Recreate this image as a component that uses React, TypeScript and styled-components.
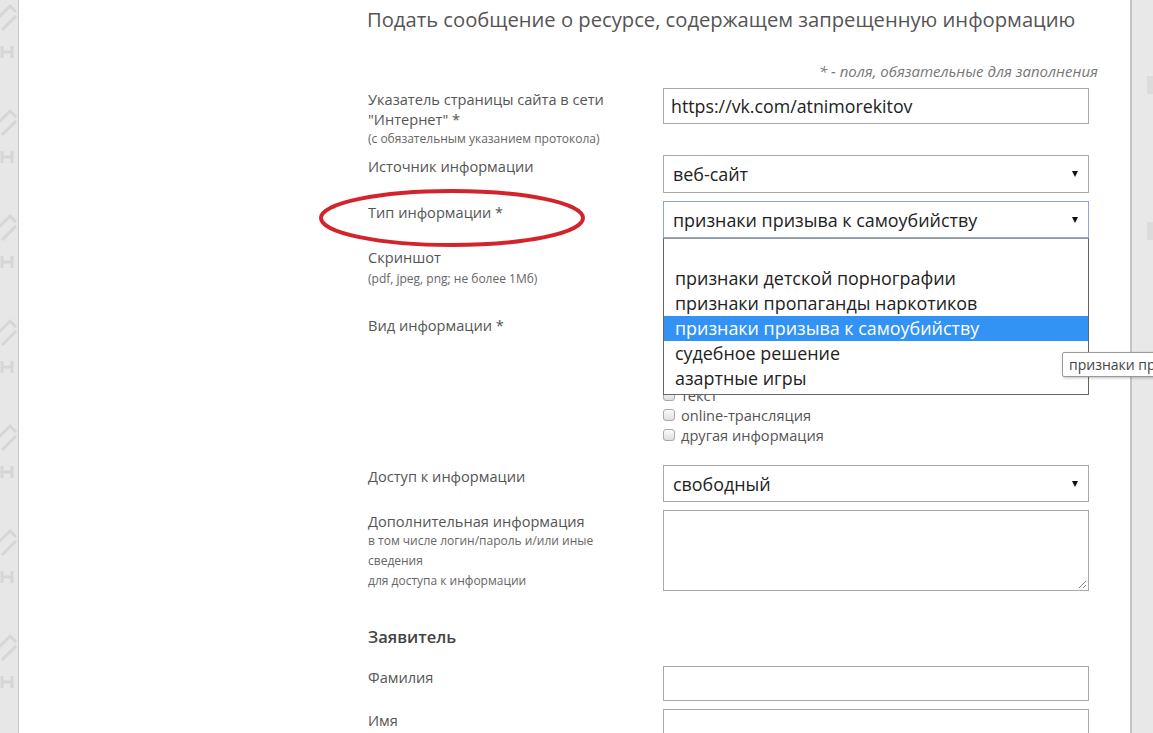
import React from 'react';
import styled, { createGlobalStyle } from 'styled-components';

const GlobalStyle = createGlobalStyle`
  html, body {
    margin: 0;
    padding: 0;
    background: #fff;
  }
  body {
    font-family: 'Open Sans', 'Noto Sans', sans-serif;
    color: #555;
  }
`;

const Page = styled.div`
  position: relative;
  display: flex;
  width: 1153px;
  height: 733px;
  overflow: hidden;
`;

const LeftStrip = styled.div`
  position: relative;
  width: 18px;
  flex-shrink: 0;
  background: #e7e7e7;
  border-right: 1px solid #c9c9c9;
  overflow: hidden;
`;

const RightStrip = styled.div`
  position: relative;
  width: 21px;
  flex-shrink: 0;
  background: #e8e8e8;
  border-left: 2px solid #c4c4c4;
`;

const StripMark = styled.div<{ $top: number }>`
  position: absolute;
  right: 0;
  top: ${p => p.$top}px;
  width: 6px;
  height: 18px;
  background: #dcdcdc;
`;

const Main = styled.main`
  flex: 1;
  padding: 0 0 0 349px;
  background: #fff;
`;

const Title = styled.h1`
  margin: 5px 0 0 -1px;
  font-size: 20.2px;
  line-height: 28px;
  font-weight: 400;
  color: #555;
`;

const RequiredNote = styled.div`
  width: 730px;
  margin-top: 28px;
  text-align: right;
  font-size: 15px;
  line-height: 20px;
  font-style: italic;
  color: #777;
`;

const Form = styled.form`
  display: flex;
  flex-direction: column;
  width: 721px;
`;

const Row = styled.div<{ $mt: number }>`
  display: grid;
  grid-template-columns: 295px 426px;
  margin-top: ${p => p.$mt}px;
`;

const Label = styled.div`
  max-width: 262px;
  padding-top: 1px;
  font-size: 14.6px;
  line-height: 20px;
  color: #555;
`;

const Hint = styled.div<{ $lh?: number }>`
  font-size: 12px;
  line-height: ${p => p.$lh ?? 20}px;
  color: #666;
`;

const TextInput = styled.div<{ $h: number }>`
  box-sizing: border-box;
  height: ${p => p.$h}px;
  border: 1px solid #aaa;
  padding: 0 7px;
  display: flex;
  align-items: center;
  font-size: 17.8px;
  color: #222;
  background: #fff;
`;

const Select = styled.div<{ $h: number; $focus?: boolean }>`
  box-sizing: border-box;
  height: ${p => p.$h}px;
  border: 1px solid ${p => (p.$focus ? '#8da6c9' : '#aaa')};
  padding: 0 10px 0 9px;
  display: flex;
  align-items: center;
  justify-content: space-between;
  font-size: 17.9px;
  color: #222;
  background: #fff;
`;

const Arrow = styled.span`
  width: 0;
  height: 0;
  border-left: 3px solid transparent;
  border-right: 3px solid transparent;
  border-top: 6px solid #111;
`;

const TextArea = styled.div`
  position: relative;
  box-sizing: border-box;
  height: 81px;
  border: 1px solid #aaa;
  background: #fff;
`;

const Grip = styled.svg`
  position: absolute;
  right: 1px;
  bottom: 1px;
`;

const CheckList = styled.div`
  padding-top: 11px;
  display: flex;
  flex-direction: column;
`;

const CheckItem = styled.label`
  display: flex;
  align-items: center;
  gap: 6px;
  font-size: 14.6px;
  line-height: 20px;
  color: #555;
`;

const Box = styled.span`
  box-sizing: border-box;
  width: 12px;
  height: 12px;
  border: 1px solid #aaa;
  border-radius: 3px;
  background: linear-gradient(#fcfcfc, #dedede);
`;

const SectionTitle = styled.h2`
  margin: 34px 0 0;
  font-size: 16.5px;
  line-height: 24px;
  font-weight: 600;
  color: #444;
`;

const Dropdown = styled.ul`
  position: absolute;
  left: 663px;
  top: 238px;
  box-sizing: border-box;
  width: 426px;
  height: 157px;
  margin: 0;
  padding: 2px 0 0;
  list-style: none;
  background: #fff;
  border: 1px solid #666;
  border-top-color: #999;
`;

const Option = styled.li<{ $active?: boolean }>`
  height: 25px;
  line-height: 25px;
  padding-left: 11px;
  font-size: 17.9px;
  color: ${p => (p.$active ? '#fff' : '#222')};
  background: ${p => (p.$active ? '#3393f5' : 'transparent')};
`;

const Tooltip = styled.div`
  position: absolute;
  left: 1062px;
  top: 352px;
  padding: 2px 6px;
  white-space: nowrap;
  font-size: 14px;
  line-height: 19px;
  color: #444;
  background: #fff;
  border: 1px solid #999;
  border-radius: 2px;
  box-shadow: 1px 1px 3px rgba(0, 0, 0, 0.25);
`;

const Annotation = styled.svg`
  position: absolute;
  left: 316px;
  top: 186px;
  pointer-events: none;
`;

const typeOptions = [
  '',
  'признаки детской порнографии',
  'признаки пропаганды наркотиков',
  'признаки призыва к самоубийству',
  'судебное решение',
  'азартные игры',
];

const kinds = [
  'фото',
  'видео',
  'аудио',
  'текст',
  'online-трансляция',
  'другая информация',
];

const Watermark: React.FC = () => (
  <svg width="18" height="733" viewBox="0 0 18 733">
    {[0, 1, 2, 3, 4, 5, 6].map(i => (
      <g key={i} transform={`translate(0 ${i * 105 - 10})`} fill="none" stroke="#d6d6d6" strokeWidth="3">
        <path d="M-2 28 L10 16 L16 22" />
        <path d="M2 40 L16 26" />
        <path d="M2 56 L2 68 M12 56 L12 68 M2 62 L12 62" />
      </g>
    ))}
  </svg>
);

export default function App() {
  return (
    <>
      <GlobalStyle />
      <Page>
        <LeftStrip>
          <Watermark />
        </LeftStrip>
        <Main>
          <Title>Подать сообщение о ресурсе, содержащем запрещенную информацию</Title>
          <RequiredNote>* - поля, обязательные для заполнения</RequiredNote>
          <Form>
            <Row $mt={7}>
              <Label>
                Указатель страницы сайта в сети "Интернет" *
                <Hint>(с обязательным указанием протокола)</Hint>
              </Label>
              <TextInput $h={36}>https://vk.com/atnimorekitov</TextInput>
            </Row>
            <Row $mt={6}>
              <Label>Источник информации</Label>
              <Select $h={38}>
                веб-сайт
                <Arrow />
              </Select>
            </Row>
            <Row $mt={8}>
              <Label>Тип информации *</Label>
              <Select $h={37} $focus>
                признаки призыва к самоубийству
                <Arrow />
              </Select>
            </Row>
            <Row $mt={8}>
              <Label>
                Скриншот
                <Hint $lh={24}>(pdf, jpeg, png; не более 1Мб)</Hint>
              </Label>
              <div />
            </Row>
            <Row $mt={23}>
              <Label>Вид информации *</Label>
              <CheckList>
                {kinds.map(k => (
                  <CheckItem key={k}>
                    <Box />
                    {k}
                  </CheckItem>
                ))}
              </CheckList>
            </Row>
            <Row $mt={20}>
              <Label>Доступ к информации</Label>
              <Select $h={37}>
                свободный
                <Arrow />
              </Select>
            </Row>
            <Row $mt={8}>
              <Label>
                Дополнительная информация
                <Hint>в том числе логин/пароль и/или иные сведения</Hint>
                <Hint>для доступа к информации</Hint>
              </Label>
              <TextArea>
                <Grip width="9" height="9" viewBox="0 0 9 9">
                  <path d="M8 1 L1 8 M8 5 L5 8" stroke="#888" strokeWidth="1" />
                </Grip>
              </TextArea>
            </Row>
            <SectionTitle>Заявитель</SectionTitle>
            <Row $mt={17}>
              <Label>Фамилия</Label>
              <TextInput $h={35} />
            </Row>
            <Row $mt={8}>
              <Label>Имя</Label>
              <TextInput $h={35} />
            </Row>
          </Form>
        </Main>
        <RightStrip>
          <StripMark $top={76} />
          <StripMark $top={222} />
        </RightStrip>

        <Dropdown>
          {typeOptions.map((o, i) => (
            <Option key={i} $active={i === 3}>
              {o}
            </Option>
          ))}
        </Dropdown>
        <Tooltip>признаки призыва к самоубийству</Tooltip>
        <Annotation width="272" height="64" viewBox="0 0 272 64">
          <ellipse cx="136" cy="32" rx="131" ry="27" fill="none" stroke="#d3232b" strokeWidth="4" />
        </Annotation>
      </Page>
    </>
  );
}
